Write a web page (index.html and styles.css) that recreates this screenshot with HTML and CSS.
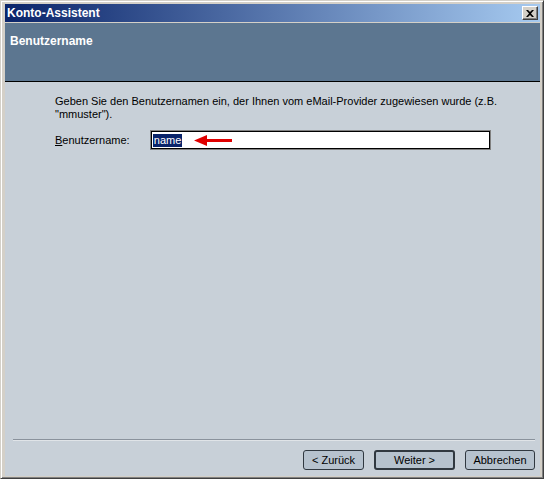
FILE: index.html
```html
<!DOCTYPE html>
<html lang="de">
<head>
    <meta charset="UTF-8">
    <title>Konto-Assistent</title>
    <link rel="stylesheet" href="styles.css">
</head>
<body>
    <div class="window">
        <div class="titlebar">
            <span class="title">Konto-Assistent</span>
            <button class="close">
                <svg width="8" height="7" viewBox="0 0 8 7">
                    <path d="M0 0h2l2 2 2-2h2L5 3.5 8 7H6L4 5 2 7H0l3-3.5z" fill="#000"/>
                </svg>
            </button>
        </div>
        <div class="header">
            <h1>Benutzername</h1>
        </div>
        <div class="content">
            <p class="intro">Geben Sie den Benutzernamen ein, der Ihnen vom eMail-Provider zugewiesen wurde (z.B. "mmuster").</p>
            <div class="row">
                <label for="user"><u>B</u>enutzername:</label>
                <div class="field">
                    <span class="selected">name</span>
                    <svg class="arrow" width="38" height="11" viewBox="0 0 38 11">
                        <path d="M0 5.5L13 0v4h25v3H13v4z" fill="#e00000"/>
                    </svg>
                </div>
            </div>
        </div>
        <div class="footer">
            <hr class="sep">
            <div class="buttons">
                <button class="btn back">&lt; Zurück</button>
                <button class="btn next">Weiter &gt;</button>
                <button class="btn cancel">Abbrechen</button>
            </div>
        </div>
    </div>
</body>
</html>
```

FILE: styles.css
```css
body {
    margin: 0;
    font-family: 'Liberation Sans', Arial, sans-serif;
    font-size: 11px;
}
.window {
    width: 544px;
    height: 479px;
    box-sizing: border-box;
    background: #d4d0c8;
    border-top: 1px solid #d4d0c8;
    border-left: 1px solid #d4d0c8;
    border-right: 1px solid #404040;
    border-bottom: 1px solid #404040;
    box-shadow: inset 1px 1px 0 #fff, inset -1px -1px 0 #808080;
    padding: 3px 3px 2px 4px;
    display: flex;
    flex-direction: column;
}
.titlebar {
    height: 18px;
    background: linear-gradient(90deg, #0a246a, #a6caf0);
    display: flex;
    align-items: center;
    justify-content: space-between;
    padding: 0 2px 0 2px;
}
.title {
    color: #fff;
    font-weight: bold;
    font-size: 12px;
}
.close {
    width: 16px;
    height: 14px;
    padding: 0;
    background: #d4d0c8;
    border: 1px solid;
    border-color: #fff #404040 #404040 #fff;
    box-shadow: inset -1px -1px 0 #808080;
    display: flex;
    align-items: center;
    justify-content: center;
}
.header {
    margin-top: 1px;
    height: 58px;
    background: #5c7690;
    border-bottom: 1px solid #000;
    padding: 0 5px;
}
.header h1 {
    margin: 11px 0 0;
    font-size: 12px;
    color: #fff;
}
.content {
    flex: 1;
    background: #c8d0d8;
    padding: 13px 50px 0 50px;
}
.intro {
    margin: 0;
    width: 445px;
    line-height: 13px;
}
.row {
    display: flex;
    align-items: center;
    margin-top: 10px;
}
.row label {
    width: 96px;
}
.field {
    width: 337px;
    height: 16px;
    background: #fff;
    border: 1px solid #000;
    box-shadow: 0 0 0 1px #808080;
    display: flex;
    align-items: center;
    padding-left: 1px;
}
.selected {
    background: #0a246a;
    color: #fff;
    padding: 0 1px;
    line-height: 13px;
}
.arrow {
    margin-left: 12px;
}
.footer {
    background: #c8d0d8;
    padding: 0 5px 6px 8px;
}
.sep {
    margin: 0 0 9px;
    border: none;
    border-top: 1px solid #8a929c;
    border-bottom: 1px solid #e0e4e8;
}
.buttons {
    display: flex;
    justify-content: flex-end;
    gap: 10px;
}
.btn {
    height: 20px;
    padding: 0;
    font-family: 'Liberation Sans', Arial, sans-serif;
    font-size: 11px;
    color: #000;
    background: #b6c2ce;
    border: 1px solid #303840;
    border-radius: 3px;
}
.back {
    width: 61px;
}
.next {
    width: 81px;
    border-width: 2px;
}
.cancel {
    width: 70px;
}
```
